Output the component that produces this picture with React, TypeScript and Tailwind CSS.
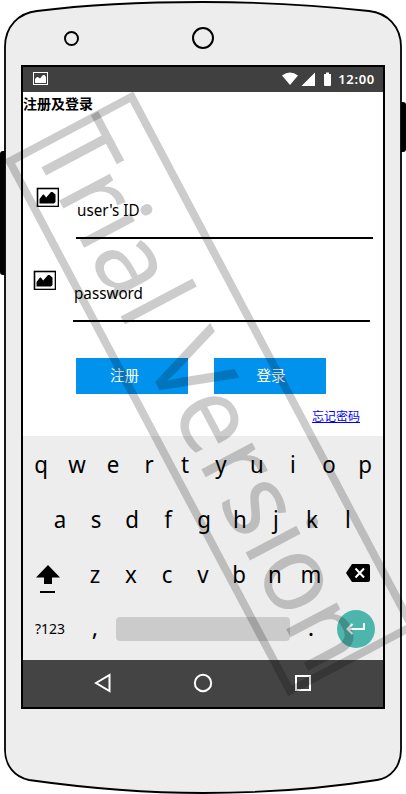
import React from "react";

const ROW_ONE = "qwertyuiop".split("");
const ROW_TWO = "asdfghjkl".split("");
const ROW_THREE = "zxcvbnm".split("");

function PictureIcon() {
  return (
    <svg viewBox="0 0 23 20" className="h-5 w-[23px] shrink-0">
      <rect x="1.500" y="1.500" width="21" height="18" fill="#fff" stroke="#000" strokeWidth="1.600" />
      <path d="M3.500 16.500V12L7 7.500H7.800L10.200 10.500L15 5H16.500L19.500 7.500V15L18 16.500Z" />
    </svg>
  );
}

function PhoneBody() {
  return (
    <svg viewBox="0 0 406 794" className="absolute inset-0 h-full w-full">
      <rect x="0" y="151" width="9" height="124" rx="3" />
      <rect x="396" y="102" width="10" height="50" rx="3" />
      <path
        d="M5 47C5 26 19 13 37 11C92 4 148 2 203 2C258 2 314 5 369 11C387 13 401 26 401 47V750C401 766 391 778 377 780C320 789 262 793 203 793C144 793 86 788 29 780C15 777 5 766 5 750Z"
        fill="#ededed"
        stroke="#000"
        strokeWidth="1.8"
      />
      <circle cx="71.500" cy="38.500" r="6.500" fill="none" stroke="#000" strokeWidth="2" />
      <circle cx="203" cy="38" r="10" fill="none" stroke="#000" strokeWidth="2" />
    </svg>
  );
}

function StatusBar() {
  return (
    <div className="flex h-[25px] shrink-0 items-center bg-[#404040] pl-[10px] pr-2 text-white">
      <svg viewBox="0 0 15 13" className="-mt-0.5 h-[13px] w-[15px]">
        <rect x="0.500" y="0.500" width="14" height="12" fill="none" stroke="#fff" />
        <path d="M2 11V7L4 5H5L7 6.500L10 3H11.500L13 5V11Z" fill="#fff" />
      </svg>
      <svg viewBox="0 0 52 14" className="-mt-px ml-auto h-[14px] w-[52px]">
        <path d="M0 3.500Q8 -2.500 16 3.500L8 13Z" fill="#fff" />
        <path d="M19.500 14L33 0.500V14Z" fill="#fff" />
        <path d="M42 2H44V0.500H47V2H49V13Q49 14 48 14H43Q42 14 42 13Z" fill="#fff" />
      </svg>
      <span className="ml-1 text-[13px] font-semibold leading-none tracking-[0.7px]">12:00</span>
    </div>
  );
}

function Field({ label, className }: { label: string; className: string }) {
  return (
    <div className={`flex h-[52px] ${className}`}>
      <PictureIcon />
      <div className="ml-[17px] flex w-[297px] items-start border-b-2 border-black pl-px pt-[12px]">
        <span className="origin-left scale-x-[0.95] text-[16px] leading-[22px]">{label}</span>
      </div>
    </div>
  );
}

function Key({ label }: { label: string }) {
  return <span className="w-9 scale-x-[0.93] text-center">{label}</span>;
}

function Keyboard() {
  return (
    <div className="h-[224px] shrink-0 bg-[#ededed] text-[24px] leading-[33px]">
      <div className="-ml-[0.5px] flex pt-[11px]">
        {ROW_ONE.map((k) => <Key key={k} label={k} />)}
      </div>
      <div className="flex pl-[19px] pt-[22px]">
        {ROW_TWO.map((k) => <Key key={k} label={k} />)}
      </div>
      <div className="flex pt-[22px]">
        <svg viewBox="0 0 24 28" className="ml-[13px] mt-2 h-7 w-6 shrink-0">
          <path d="M12 0L24 12.500H16V19H8V12.500H0Z" />
          <rect x="4" y="26" width="15" height="2" />
        </svg>
        <div className="ml-[17px] flex w-[252px]">
          {ROW_THREE.map((k) => <Key key={k} label={k} />)}
        </div>
        <svg viewBox="0 0 24 18" className="ml-[17px] mt-[7px] h-[18px] w-6 shrink-0">
          <path d="M6 0H22Q24 0 24 2V16Q24 18 22 18H6L0 9Z" />
          <path d="M9.500 4.500L18 13.500M18 4.500L9.500 13.500" stroke="#fff" strokeWidth="2" />
        </svg>
      </div>
      <div className="flex pt-[18px]">
        <span className="ml-[12px] w-[32px] pt-[7px] text-[14px] leading-[22px]">?123</span>
        <span className="ml-[24px] w-[8px] text-center leading-[31px]">,</span>
        <div className="ml-[17px] mt-[6px] h-6 w-[174px] rounded bg-[#cbcbcb]" />
        <span className="ml-[17px] w-[8px] text-center leading-[31px]">.</span>
        <div className="ml-[22px] -mt-px flex h-[38px] w-[38px] items-center justify-center rounded-full bg-[#4db6ac]">
          <svg viewBox="0 0 20 12" className="-mt-px h-3 w-5">
            <path d="M18 0V6H2M6.500 1L1.500 6L6.500 11" fill="none" stroke="#fff" strokeWidth="2" />
          </svg>
        </div>
      </div>
    </div>
  );
}

function NavBar() {
  return (
    <div className="flex h-[47px] shrink-0 items-center justify-center gap-[82px] bg-[#444] pb-px">
      <svg viewBox="0 0 18 20" className="h-5 w-[18px]">
        <path d="M2 10L15.500 2V18Z" fill="none" stroke="#fff" strokeWidth="2" />
      </svg>
      <svg viewBox="0 0 18 18" className="h-[18px] w-[18px] overflow-visible">
        <circle cx="9" cy="9" r="8.200" fill="none" stroke="#fff" strokeWidth="2" />
      </svg>
      <svg viewBox="0 0 18 18" className="h-[18px] w-[18px] overflow-visible">
        <rect x="2" y="2" width="14" height="14" fill="none" stroke="#fff" strokeWidth="2" />
      </svg>
    </div>
  );
}

function Watermark() {
  return (
    <svg viewBox="0 0 406 794" className="pointer-events-none absolute inset-0 h-full w-full">
      <g transform="translate(133.3 91.5) rotate(62.1)" fillOpacity="0.2">
        <path d="M0 0H607V146H0ZM8 8V138H599V8Z" fillRule="evenodd" />
        <text
          transform="scale(0.97 1)"
          x="0 54.4 100.2 127.500 189.700 217 247.800 307 367.900 412 465 491.500 554.600"
          y="116.500"
          fontSize="107"
        >
          Trial Version
        </text>
      </g>
    </svg>
  );
}

export default function App() {
  return (
    <div className="relative flex h-[794px] w-[406px] flex-col overflow-hidden bg-white pl-[21px] pt-[65px] font-['Noto_Sans','Noto_Sans_CJK_SC',sans-serif] text-black">
      <PhoneBody />
      <div className="relative flex h-[644px] w-[364px] flex-col border-2 border-black bg-white">
        <StatusBar />
        <div className="flex grow flex-col">
          <h1 className="h-[24px] text-[14px] font-bold leading-[23px]">注册及登录</h1>
          <Field label="user's ID" className="ml-[13px] mt-[71px]" />
          <Field label="password" className="ml-[10px] mt-[31px]" />
          <div className="ml-[53px] mt-[36px] flex gap-[26px] text-[14.5px] text-white">
            <button className="h-9 w-28 bg-[#0092ed] pr-[15px]">注册</button>
            <button className="h-9 w-28 bg-[#0092ed] pl-0.5">登录</button>
          </div>
          <a className="ml-[289px] mt-[14px] w-fit text-[12px] leading-[18px] text-[#0000ff] underline">忘记密码</a>
        </div>
        <Keyboard />
        <NavBar />
      </div>
      <Watermark />
    </div>
  );
}
